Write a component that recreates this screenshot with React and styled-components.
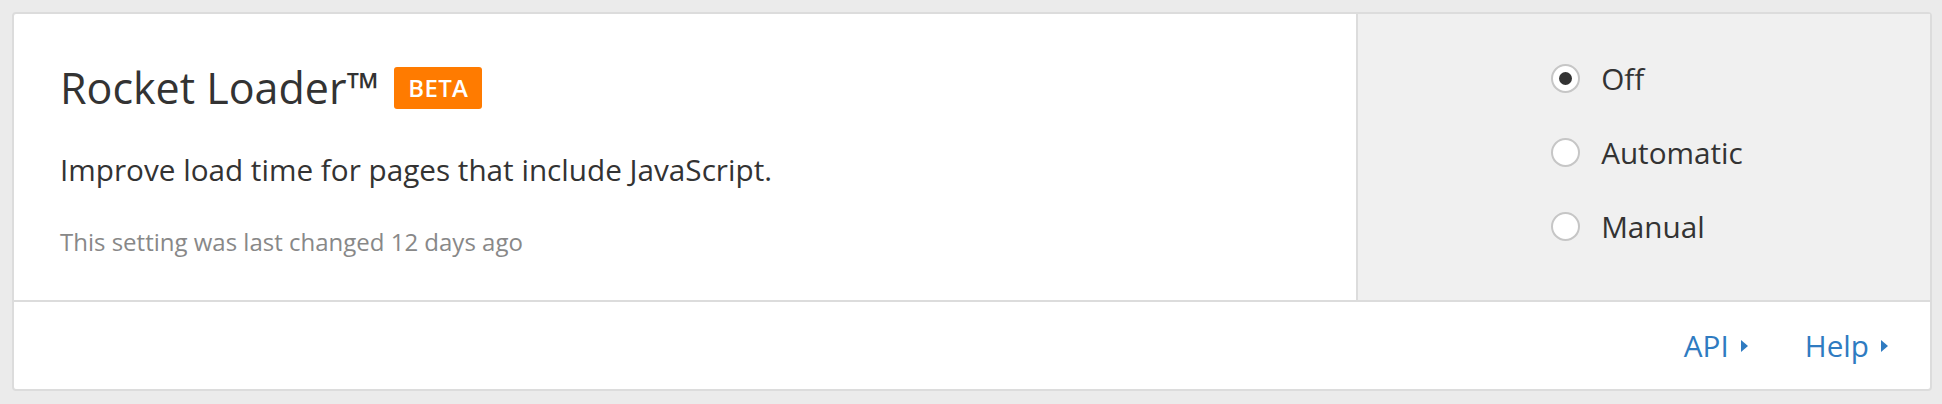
import styled, { createGlobalStyle } from "styled-components";

const GlobalStyle = createGlobalStyle`
  html, body {
    margin: 0;
    padding: 0;
    background: #ebebeb;
  }
  body {
    font-family: "Open Sans", "Liberation Sans", sans-serif;
    color: #333;
  }
`;

const Page = styled.div`
  padding: 12px 10px 14px 12px;
`;

const Card = styled.section`
  width: 1920px;
  box-sizing: border-box;
  background: #fff;
  border: 2px solid #dcdcdc;
  border-radius: 4px;
`;

const Body = styled.div`
  display: flex;
  height: 286px;
`;

const Info = styled.div`
  flex: 1;
  padding: 46px 46px 0;
`;

const Title = styled.h2`
  display: flex;
  align-items: center;
  gap: 15px;
  margin: 0;
  font-size: 43px;
  font-weight: 400;
  line-height: 56px;
  color: #333;
`;

const Badge = styled.span`
  display: inline-flex;
  align-items: center;
  justify-content: center;
  height: 42px;
  padding: 0 14px;
  border-radius: 3px;
  background: #ff7b00;
  color: #fff;
  font-size: 24px;
  font-weight: 600;
  letter-spacing: 0.3px;
`;

const Description = styled.p`
  margin: 34px 0 0;
  font-size: 29.7px;
  line-height: 40px;
  color: #333;
`;

const Meta = styled.p`
  margin: 36px 0 0;
  font-size: 24px;
  line-height: 32px;
  color: #888;
`;

const Options = styled.div`
  width: 574px;
  box-sizing: border-box;
  border-left: 2px solid #dcdcdc;
  background: #f0f0f0;
  display: flex;
  align-items: center;
  justify-content: center;
`;

const RadioList = styled.div`
  display: flex;
  flex-direction: column;
  gap: 34px;
  padding: 0 0 10px 6px;
`;

const RadioRow = styled.label`
  display: flex;
  align-items: center;
  gap: 21px;
  height: 40px;
  font-size: 29.7px;
  color: #333;
`;

const Circle = styled.span`
  width: 29px;
  height: 29px;
  box-sizing: border-box;
  border: 2px solid #c6c6c6;
  border-radius: 50%;
  background: #fff;
  display: flex;
  align-items: center;
  justify-content: center;

  &::after {
    content: "";
    width: 13px;
    height: 13px;
    border-radius: 50%;
    background: ${(p) => (p.$checked ? "#333" : "transparent")};
  }
`;

const Footer = styled.div`
  border-top: 2px solid #dcdcdc;
  height: 87px;
  display: flex;
  align-items: center;
  justify-content: flex-end;
  gap: 57px;
  padding-right: 42px;
`;

const Link = styled.a`
  display: flex;
  align-items: center;
  gap: 12px;
  font-size: 29.7px;
  color: #2f7bc1;
  text-decoration: none;
  cursor: pointer;

  &::after {
    content: "";
    border-style: solid;
    border-width: 6px 0 6px 7px;
    border-color: transparent transparent transparent #2f7bc1;
  }
`;

const options = ["Off", "Automatic", "Manual"];

export default function App() {
  return (
    <>
      <GlobalStyle />
      <Page>
        <Card>
          <Body>
            <Info>
              <Title>
                Rocket Loader™ <Badge>BETA</Badge>
              </Title>
              <Description>
                Improve load time for pages that include JavaScript.
              </Description>
              <Meta>This setting was last changed 12 days ago</Meta>
            </Info>
            <Options>
              <RadioList>
                {options.map((o) => (
                  <RadioRow key={o}>
                    <Circle $checked={o === "Off"} />
                    {o}
                  </RadioRow>
                ))}
              </RadioList>
            </Options>
          </Body>
          <Footer>
            <Link>API</Link>
            <Link>Help</Link>
          </Footer>
        </Card>
      </Page>
    </>
  );
}
